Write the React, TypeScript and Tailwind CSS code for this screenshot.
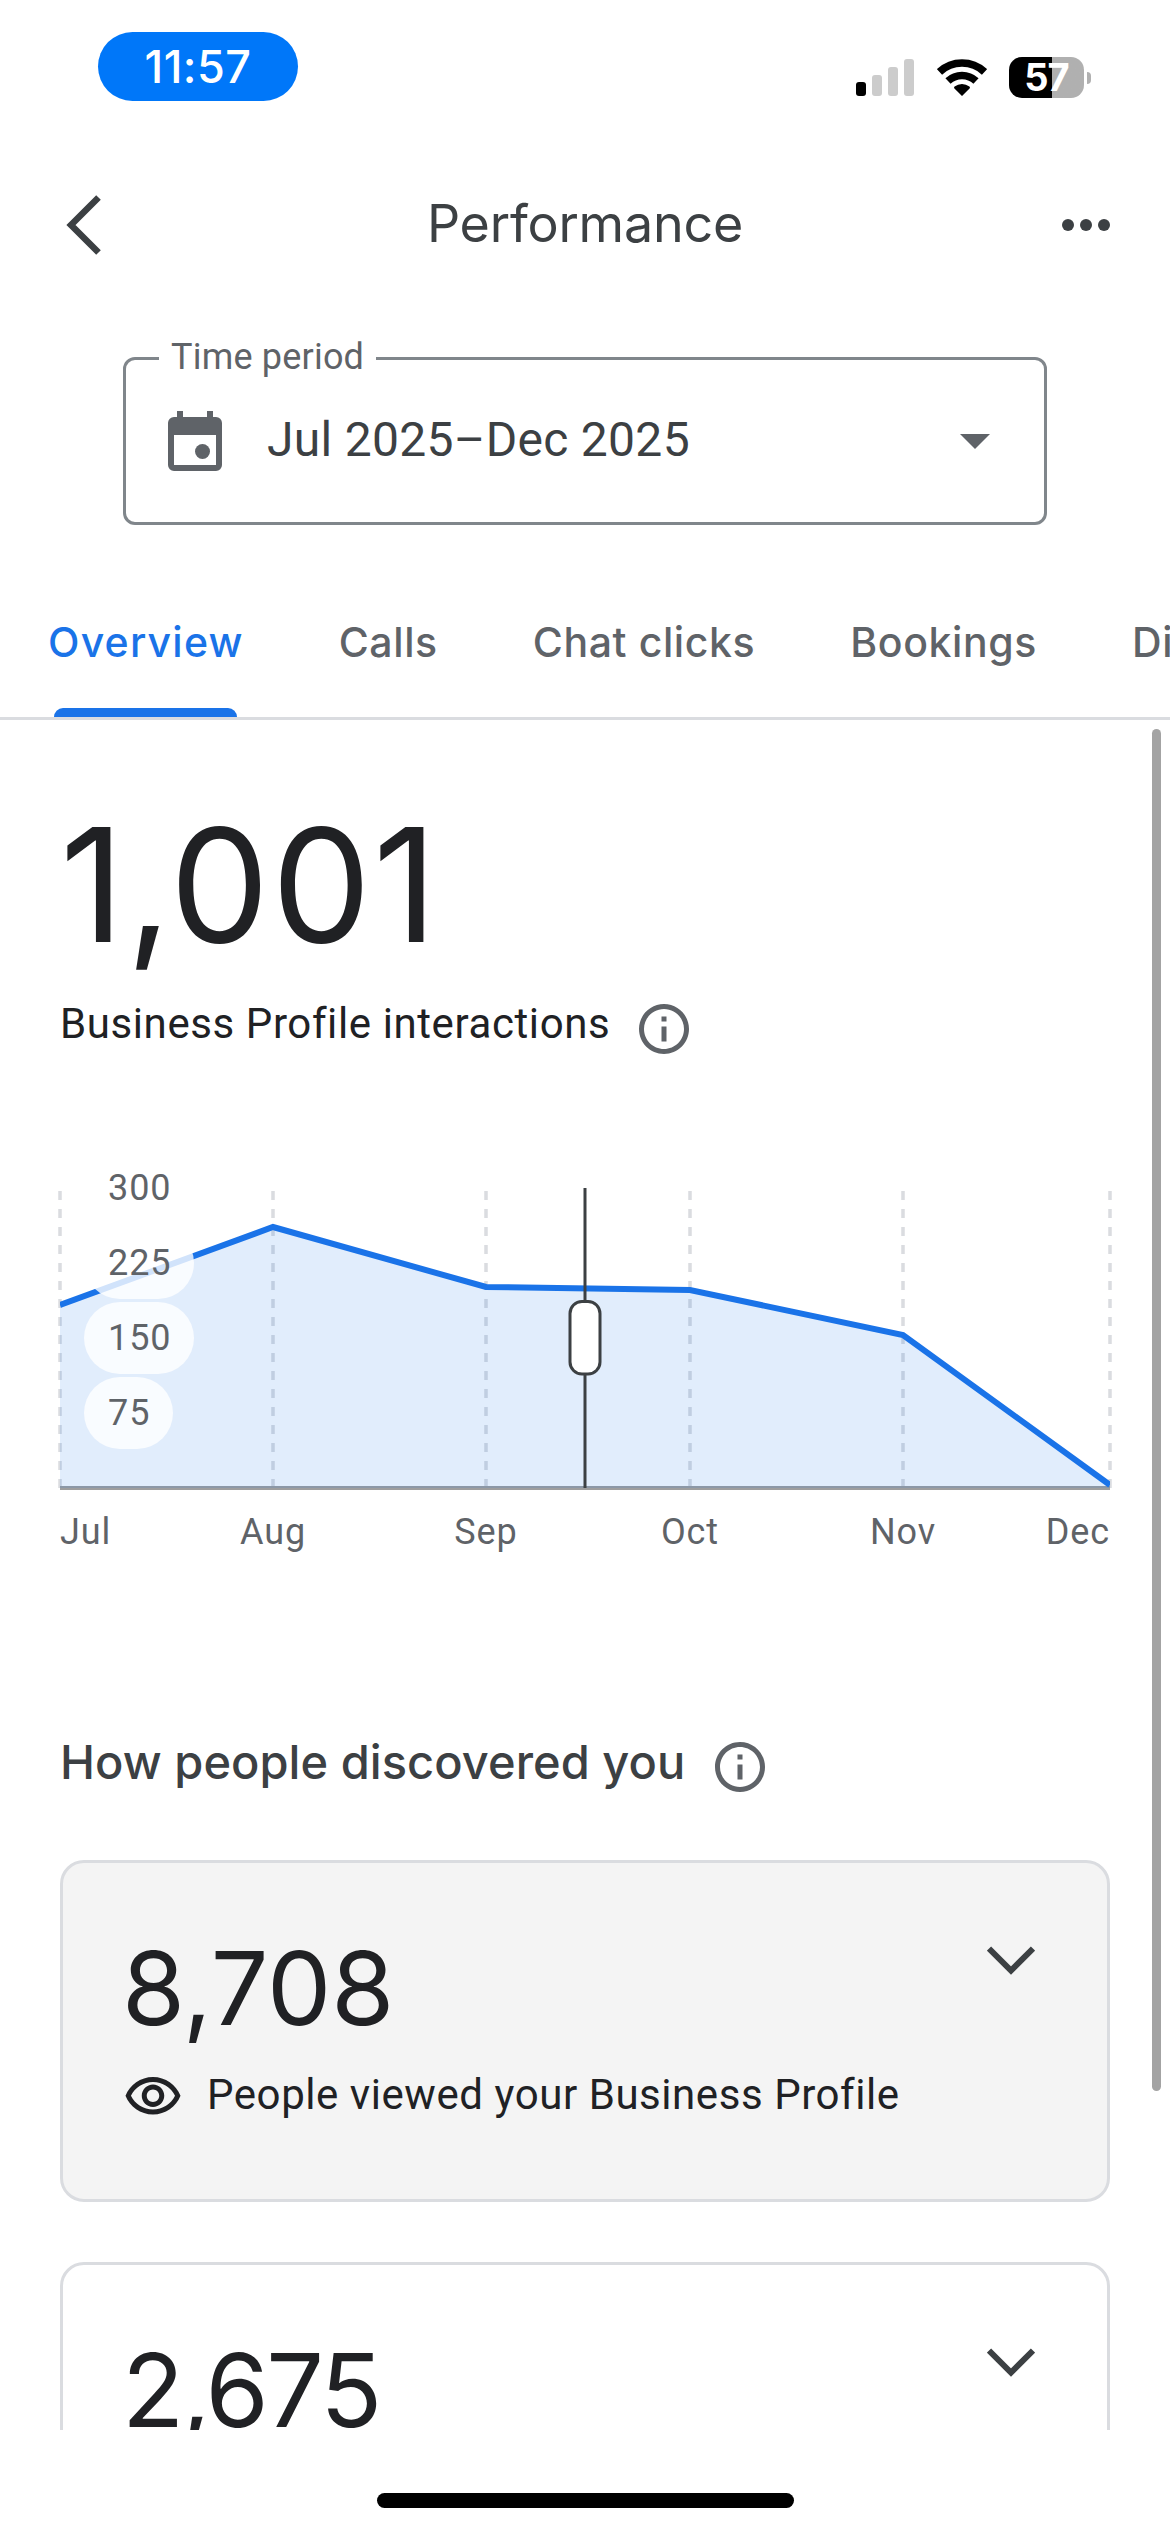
interface DataPoint {
  label: string;
  x: number;
  y: number;
}

interface InsightCardProps {
  value: string;
  valueClass: string;
  caption?: string;
  highlighted?: boolean;
}

const TABS = ['Overview', 'Calls', 'Chat clicks', 'Bookings', 'Directions'];

const CHART_BASELINE = 336;

const POINTS: DataPoint[] = [
  { label: 'Jul', x: 0, y: 153 },
  { label: 'Aug', x: 213, y: 75 },
  { label: 'Sep', x: 426, y: 135 },
  { label: 'Oct', x: 630, y: 138 },
  { label: 'Nov', x: 843, y: 183 },
  { label: 'Dec', x: 1050, y: 333 },
];

const Y_TICKS = [
  { label: '300', y: 0, width: 110 },
  { label: '225', y: 75, width: 110 },
  { label: '150', y: 150, width: 110 },
  { label: '75', y: 225, width: 89 },
];

function InfoIcon() {
  return (
    <svg viewBox="0 0 24 24" className="size-[60px] shrink-0 fill-[#5f6368]">
      <path d="M11 7h2v2h-2zm0 4h2v6h-2zm1-9C6.48 2 2 6.48 2 12s4.48 10 10 10 10-4.48 10-10S17.52 2 12 2zm0 18c-4.41 0-8-3.59-8-8s3.59-8 8-8 8 3.59 8 8-3.59 8-8 8z" />
    </svg>
  );
}

function EyeIcon() {
  return (
    <svg viewBox="0 0 24 24" className="size-[60px] shrink-0 fill-[#202124]">
      <path d="M12 6c3.79 0 7.17 2.13 8.82 5.5C19.17 14.87 15.79 17 12 17s-7.17-2.13-8.82-5.5C4.83 8.13 8.21 6 12 6m0-2C7 4 2.73 7.11 1 11.5 2.73 15.89 7 19 12 19s9.27-3.11 11-7.5C21.27 7.11 17 4 12 4zm0 5c1.38 0 2.5 1.12 2.5 2.5S13.38 14 12 14s-2.5-1.12-2.5-2.5S10.62 9 12 9m0-2c-2.48 0-4.5 2.02-4.5 4.5S9.52 16 12 16s4.5-2.02 4.5-4.5S14.48 7 12 7z" />
    </svg>
  );
}

function StatusBar() {
  return (
    <div className="flex h-[132px] items-start justify-between pt-8 pr-[79px] pl-[98px]">
      <div className="flex h-[69px] w-[200px] items-center justify-center rounded-full bg-[#0077f9] text-[45px] leading-[69px] font-medium tracking-[0.500px] text-white">
        11:57
      </div>
      <div className="mt-[25px] flex h-[41px] items-center">
        <svg viewBox="0 0 58 37" className="h-[37px] w-[58px]">
          <rect x="0" y="23" width="10" height="14" rx="3" fill="#000" />
          <rect x="16" y="16" width="10" height="21" rx="3" fill="#cccccc" />
          <rect x="32" y="8" width="10" height="29" rx="3" fill="#cccccc" />
          <rect x="48" y="0" width="10" height="37" rx="3" fill="#cccccc" />
        </svg>
        <svg viewBox="0 0 50 37" className="ml-[23px] h-[37px] w-[50px]">
          <g fill="none" stroke="#000" strokeWidth="7.6">
            <path d="M2.500 12.900A33 33 0 0 1 47.500 12.900" />
            <path d="M11 22A20.500 20.500 0 0 1 39 22" />
          </g>
          <path d="M25 37 17.200 29.200Q16.700 28.200 17.600 27.600A12 12 0 0 1 32.400 27.600Q33.300 28.200 32.800 29.200Z" />
        </svg>
        <div className="ml-[22px] flex h-[41px] w-[75px] items-center justify-center rounded-[13px] bg-linear-to-r from-black from-57% to-[#b0b0b0] to-57% text-[38px] leading-[41px] font-bold tracking-[-1px] text-white">
          57
        </div>
        <div className="ml-[3px] h-3 w-1 rounded-r-full bg-[#b0b0b0]" />
      </div>
    </div>
  );
}

function Header() {
  return (
    <header className="grid h-[186px] grid-cols-3 items-center pr-[60px] pl-[60px] text-[#3c4043]">
      <svg viewBox="0 0 35 60" className="ml-[6px] h-[60px] w-[35px] fill-none stroke-current stroke-[6.500]">
        <path d="M32.500 2.500 5 30l27.500 27.500" />
      </svg>
      <h1 className="-mt-[2px] text-center text-[52px] leading-[60px] tracking-[-0.200px]">Performance</h1>
      <svg viewBox="0 0 48 12" className="h-3 w-12 justify-self-end fill-current">
        <circle cx="6" cy="6" r="6" />
        <circle cx="24" cy="6" r="6" />
        <circle cx="42" cy="6" r="6" />
      </svg>
    </header>
  );
}

function TimePeriodSelect() {
  return (
    <div className="relative mx-[123px] mt-[39px] flex h-[168px] items-center rounded-xl border-3 border-[#80868b] pr-[54px] pl-[33px] font-['Roboto',sans-serif]">
      <span className="absolute -top-[21px] left-[33px] w-[217px] bg-white pl-3 text-[36px] leading-9 tracking-[0.200px] text-[#5f6368]">
        Time period
      </span>
      <svg viewBox="0 0 24 24" className="mt-[6px] size-[72px] fill-[#5f6368]">
        <path
          fillRule="evenodd"
          d="M6 1h2v2h8V1h2v2h1a2 2 0 0 1 2 2v14a2 2 0 0 1-2 2H5a2 2 0 0 1-2-2V5a2 2 0 0 1 2-2h1zM5 9v10h14V9z"
        />
        <circle cx="14.500" cy="14.500" r="2.500" />
      </svg>
      <span className="-mt-[2px] ml-9 text-[48px] leading-[56px] tracking-[0.300px] text-[#3c4043]">
        Jul 2025–Dec 2025
      </span>
      <svg viewBox="0 0 30 15" className="ml-auto h-[15px] w-[30px] fill-[#5f6368]">
        <path d="M0 0h30L15 15z" />
      </svg>
    </div>
  );
}

function Tabs() {
  return (
    <nav className="flex h-[195px] gap-[95px] overflow-hidden border-b-3 border-[#dadce0] pl-12 text-[41px] font-medium whitespace-nowrap">
      {TABS.map((tab, i) => (
        <div
          key={tab}
          className={`relative pt-[87px] leading-[60px] ${
            i === 0 ? 'tracking-[1.200px] text-[#1a73e8]' : 'tracking-[0.600px] text-[#5f6368]'
          }`}
        >
          {tab}
          {i === 0 && <div className="absolute bottom-0 left-[6px] h-[9px] w-[183px] rounded-t-[9px] bg-[#1a73e8]" />}
        </div>
      ))}
    </nav>
  );
}

function InteractionsChart() {
  const line = POINTS.map((p) => `${p.x},${p.y}`).join(' ');

  return (
    <svg
      viewBox="0 0 1050 408"
      className="mt-[93px] h-[408px] w-[1050px] shrink-0 overflow-visible font-['Roboto',sans-serif] text-[36px]"
    >
      {POINTS.map((p) => (
        <line
          key={p.label}
          x1={p.x}
          x2={p.x}
          y1="39"
          y2={CHART_BASELINE}
          stroke="#dadce0"
          strokeWidth="3.500"
          strokeDasharray="9 9"
        />
      ))}
      <line x1="0" x2="1050" y1={CHART_BASELINE} y2={CHART_BASELINE} stroke="#9e9e9e" strokeWidth="4" />
      <polygon points={`0,${CHART_BASELINE} ${line} 1050,${CHART_BASELINE}`} fill="#1a73e8" fillOpacity="0.13" />
      <clipPath id="plot">
        <rect x="0" y="0" width="1050" height="408" />
      </clipPath>
      <polyline points={line} fill="none" stroke="#1a73e8" strokeWidth="6" clipPath="url(#plot)" />

      {Y_TICKS.map((t) => (
        <g key={t.label}>
          <rect x="24" y={t.y} width={t.width} height="72" rx="36" fill="#fff" fillOpacity="0.8" />
          <text x="48" y={t.y + 48} fill="#5f6368" className="tracking-[0.900px]">
            {t.label}
          </text>
        </g>
      ))}

      {POINTS.map((p, i) => (
        <text
          key={p.label}
          x={p.x}
          y="392"
          fill="#5f6368"
          textAnchor={i === 0 ? 'start' : i === POINTS.length - 1 ? 'end' : 'middle'}
          className="tracking-[0.900px]"
        >
          {p.label}
        </text>
      ))}

      {/* Scrubber */}
      <line x1="525" x2="525" y1="36" y2={CHART_BASELINE} stroke="#3c4043" strokeWidth="3" />
      <rect x="510" y="149.500" width="30" height="72.500" rx="12" fill="#fff" stroke="#3c4043" strokeWidth="3" />
    </svg>
  );
}

function InsightCard({ value, valueClass, caption, highlighted }: InsightCardProps) {
  return (
    <section
      className={`flex h-[342px] shrink-0 items-start justify-between rounded-3xl border-3 border-[#dadce0] pt-[74px] pr-[72px] pl-[60px] ${
        highlighted ? 'bg-[#f4f4f4]' : 'bg-white'
      }`}
    >
      <div>
        <div className={`-ml-px text-[102px] leading-[102px] ${valueClass}`}>{value}</div>
        {caption && (
          <div className="mt-7 flex items-center">
            <EyeIcon />
            <span className="mb-[5px] ml-6 font-['Roboto',sans-serif] text-[42px] leading-[50px] tracking-[0.560px]">
              {caption}
            </span>
          </div>
        )}
      </div>
      <svg viewBox="0 0 48 29" className="mt-[9px] h-[29px] w-12 fill-none stroke-[#3c4043] stroke-6">
        <path d="M2 2.500 24 24.500 46 2.500" />
      </svg>
    </section>
  );
}

export default function App() {
  return (
    <div className="flex h-[2532px] w-[1170px] flex-col overflow-hidden bg-white font-['Inter',sans-serif] text-[#202124]">
      <StatusBar />
      <Header />
      <TimePeriodSelect />
      <Tabs />

      <main className="relative flex h-[1710px] shrink-0 flex-col overflow-hidden px-[60px]">
        <div className="mt-[86px] text-[158px] leading-[158px] tracking-[2px]">1,001</div>
        <div className="mt-[35px] flex items-center">
          <span className="mb-[10px] font-['Roboto',sans-serif] text-[42px] leading-[50px] tracking-[0.600px]">
            Business Profile interactions
          </span>
          <div className="ml-6">
            <InfoIcon />
          </div>
        </div>

        <InteractionsChart />

        <div className="mt-[177px] flex items-center">
          <h2 className="mb-[10px] text-[47px] leading-[50px] font-medium tracking-[0.050px] text-[#3c4043]">
            How people discovered you
          </h2>
          <div className="ml-[25px]">
            <InfoIcon />
          </div>
        </div>

        <div className="mt-[63px] flex flex-col gap-[60px]">
          <InsightCard
            value="8,708"
            valueClass="tracking-normal"
            caption="People viewed your Business Profile"
            highlighted
          />
          <InsightCard value="2,675" valueClass="tracking-[-2.700px]" />
        </div>

        <div className="absolute top-[9px] right-[9px] h-[1362px] w-[9px] rounded-full bg-[#a3a3a3]" />
      </main>

      <div className="mx-auto mt-[63px] h-[15px] w-[417px] shrink-0 rounded-full bg-black" />
    </div>
  );
}
